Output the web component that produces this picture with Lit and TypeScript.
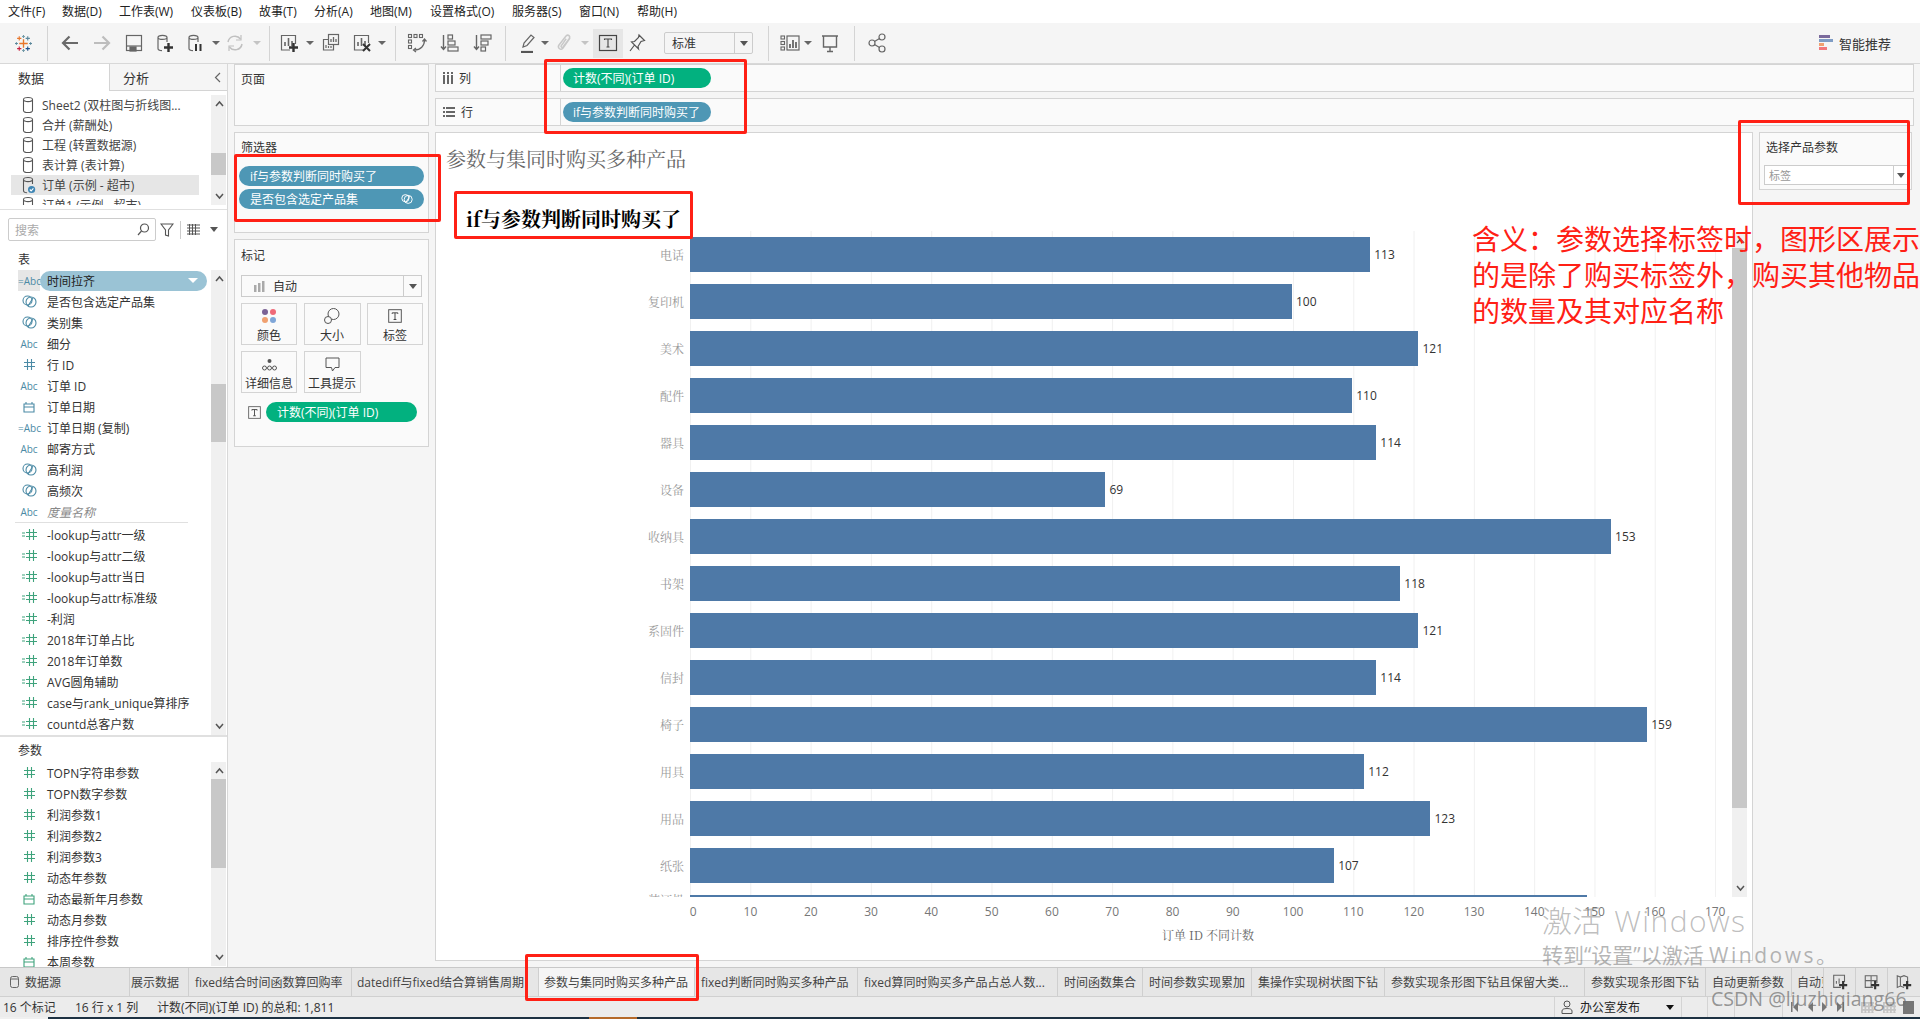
import { LitElement, html, svg, css } from "lit";
import { customElement } from "lit/decorators.js";

const S = (body: unknown, w = 20, h = 20, vb = "0 0 20 20") =>
  html`<svg width=${w} height=${h} viewBox=${vb} fill="none" stroke="#666" stroke-width="1.2">${body}</svg>`;

const plus = (x: number, y: number, c = "#333") =>
  svg`<path d="M${x + 4.5} ${y}v9M${x} ${y + 4.5}h9" stroke=${c} stroke-width="2.4"/>`;
const cyl = svg`<path d="M3 4.5C3 1.6 12 1.6 12 4.5V9M3 4.5C3 7 12 7 12 4.5M3 4.5V15.5C3 17 5 17.6 7 17.7" />`;
const barsMini = svg`<path d="M6 13V9M9.5 13V5M13 13V8" stroke-width="1.6"/>`;

const I: Record<string, unknown> = {
  logo: S(svg`<g stroke-width="1.3">
    <path d="M10 5v10M5 10h10" stroke="#e8762b" stroke-width="1.6"/>
    <path d="M5 1.5v5M2.5 4h5" stroke="#e8762b"/>
    <path d="M15 1.5v5M12.5 4h5" stroke="#5b879b"/>
    <path d="M5 13.5v5M2.5 16h5" stroke="#c8203f"/>
    <path d="M15 13.5v5M12.5 16h5" stroke="#1f4f8b"/>
    <path d="M10 0v3.4M8.4 1.7h3.2" stroke="#7099a6"/>
    <path d="M10 16.6v3.4M8.4 18.3h3.2" stroke="#7099a6"/>
    <path d="M1.7 8.4v3.2M0 10h3.4" stroke="#59879b"/>
    <path d="M18.3 8.4v3.2M16.6 10H20" stroke="#59879b"/></g>`, 17, 17),
  back: S(svg`<path d="M18 10H3M9.5 3.5 3 10l6.5 6.5" stroke="#6a6a6a" stroke-width="2.2"/>`),
  fwd: S(svg`<path d="M2 10h15M10.5 3.5 17 10l-6.5 6.5" stroke="#bdbdbd" stroke-width="2.2"/>`),
  save: S(svg`<rect x="2.5" y="2.5" width="15" height="15"/><path d="M3 13h14"/><rect x="6" y="14" width="6" height="4" fill="#666"/>`),
  dsadd: S(svg`${cyl}${plus(9, 10)}`),
  dspause: S(svg`${cyl}<path d="M10 11v7M14.5 11v7" stroke="#333" stroke-width="2"/>`),
  refresh: S(svg`<path d="M3 9a7 7 0 0 1 12.5-3M17 11a7 7 0 0 1-12.5 3" stroke="#c0c0c0" stroke-width="1.5"/><path d="M16 2v5h-5M4 18v-5h5" stroke="#c0c0c0"/>`),
  newsheet: S(svg`<path d="M11 17H2.5V2.5h14V11"/>${barsMini}${plus(10, 10)}`),
  dup: S(svg`<rect x="7.5" y="1.5" width="10" height="10" fill="#f5f5f5"/><path d="M10 9V6M12.5 9V4M15 9V6" stroke-width="1.3"/><path d="M7 6.500H2.500V17h10v-5"/><path d="M5 15v-3M7.500 15v-2M10 15v-2"/>`),
  clear: S(svg`<path d="M11 17H2.5V2.5h14V10"/>${barsMini}<path d="M11 11l7 7M18 11l-7 7" stroke="#333" stroke-width="2"/>`),
  swap: S(svg`<g stroke-width="1.1"><rect x="1.500" y="1.500" width="3" height="3"/><rect x="7" y="1.500" width="3" height="3"/><rect x="12.500" y="1.500" width="3" height="3"/><rect x="1.500" y="7" width="3" height="3"/><rect x="1.500" y="12.500" width="3" height="3"/></g><path d="M17.500 7c0 6-4 10-10 10" stroke-width="1.3"/><path d="M15.500 8.500l2-2.500 2 2.500M9 15l-2.500 2 2.500 2" stroke-width="1.3"/>`),
  sortasc: S(svg`<path d="M3.500 2v14M1 13.500l2.500 3 2.500-3" stroke-width="1.4"/><rect x="8" y="2" width="4.500" height="4"/><rect x="8" y="8" width="7" height="4"/><rect x="8" y="14" width="10" height="4"/>`),
  sortdesc: S(svg`<path d="M3.500 2v14M1 13.500l2.500 3 2.500-3" stroke-width="1.4"/><rect x="8" y="2" width="10" height="4"/><rect x="8" y="8" width="7" height="4"/><rect x="8" y="14" width="4.500" height="4"/>`),
  pen: S(svg`<path d="M5 14l1-4 7-8 3 2.500-7 8z"/><path d="M3 19h12" stroke="#555" stroke-width="2.2"/>`),
  clip: S(svg`<path d="M15 5l-7 10c-2 3 -6 0-4-3l7-9c2-2 5 0 3 3l-6 8c-1 1-2.500 0-1.800-1.200l5-7" stroke="#c8c8c8" stroke-width="1.5"/>`),
  t: S(svg`<rect x="1.500" y="2.500" width="17" height="15" stroke="#444" stroke-width="1.2"/><path d="M6.500 7V6h7v1M10 6v8M8.500 14h3" stroke="#444" stroke-width="1.1"/>`),
  pin: S(svg`<path d="M12 2l5.500 5.500-3.500 1-3 5 .5 2.500-7-7 3-.5 4-4zM7.500 12 3 18" stroke="#555"/>`),
  chart: S(svg`<g stroke-width="1.1"><rect x="1" y="3" width="3.500" height="3"/><rect x="1" y="8.500" width="3.500" height="3"/><rect x="1" y="14" width="3.500" height="3"/></g><rect x="7" y="3" width="12" height="14"/><path d="M10 15v-4M13 15V7M16 15v-6" stroke-width="1.800"/>`),
  present: S(svg`<path d="M2 3h16M3.500 3v11h13V3M10 14v4M7 18.500h6" stroke-width="1.400"/>`),
  share: S(svg`<circle cx="5" cy="10" r="3"/><circle cx="15" cy="4" r="3"/><circle cx="15" cy="16" r="3"/><path d="M7.500 8.500 12.500 5.500M7.500 11.500l5 3"/>`),
  cyl: S(svg`<path d="M3 4C3 1 13 1 13 4V16C13 19 3 19 3 16ZM3 4C3 7 13 7 13 4" stroke="#555"/>`, 16, 18, "0 0 16 20"),
  cylsel: html`<svg width="16" height="18" viewBox="0 0 16 20" fill="none" stroke="#555" stroke-width="1.200"><path d="M3 4C3 1 13 1 13 4V9M3 4C3 7 13 7 13 4M3 4V16C3 17.500 5 18.500 7 18.600"/><circle cx="12" cy="15" r="4" fill="#3f86b4" stroke="none"/><path d="M10 15l1.500 1.500 2.500-2.700" stroke="#fff"/></svg>`,
  set: html`<svg width="15" height="13" viewBox="0 0 15 13" fill="none" stroke="#4b8aa5" stroke-width="1.100"><circle cx="5.500" cy="5.500" r="4.500"/><circle cx="9" cy="7" r="5"/><path d="M6 11 11 3"/></svg>`,
  setw: html`<svg width="12" height="12" viewBox="0 0 15 13" fill="none" stroke="#fff" stroke-width="1.200"><circle cx="5.500" cy="5.500" r="4.500"/><circle cx="9" cy="7" r="5"/><path d="M6 11 11 3"/></svg>`,
  cal: html`<svg width="12" height="12" viewBox="0 0 12 12" fill="none" stroke="#4b8aa5" stroke-width="1.100"><path d="M1 3h10v8H1zM3 3V1M9 3V1M1 6h10"/></svg>`,
  calg: html`<svg width="12" height="12" viewBox="0 0 12 12" fill="none" stroke="#3ea37c" stroke-width="1.100"><path d="M1 3h10v8H1zM3 3V1M9 3V1M1 6h10"/></svg>`,
  hash: html`<svg width="11" height="11" viewBox="0 0 11 11" fill="none" stroke="#4b8aa5" stroke-width="1.100"><path d="M3.500 0v11M7.500 0v11M0 3.500h11M0 7.500h11"/></svg>`,
  hashg: html`<svg width="11" height="11" viewBox="0 0 11 11" fill="none" stroke="#3ea37c" stroke-width="1.100"><path d="M3.500 0v11M7.500 0v11M0 3.500h11M0 7.500h11"/></svg>`,
  eqhash: html`<svg width="15" height="11" viewBox="0 0 15 11" fill="none" stroke="#3ea37c" stroke-width="1.100"><path d="M0 4h3M0 7h3M7.500 0v11M11.500 0v11M4 3.500h11M4 7.500h11"/></svg>`,
  search: html`<svg width="13" height="13" viewBox="0 0 13 13" fill="none" stroke="#555" stroke-width="1.200"><circle cx="7.500" cy="5" r="4"/><path d="M4.500 8 1 12"/></svg>`,
  filter: html`<svg width="14" height="14" viewBox="0 0 14 14" fill="none" stroke="#555" stroke-width="1.100"><path d="M1 1h12L8.500 7v6l-3-1V7z"/></svg>`,
  grid: html`<svg width="13" height="11" viewBox="0 0 13 11" fill="none" stroke="#555" stroke-width="1"><path d="M0 1h13M0 4h13M0 7h13M0 10h13M2.500 0v11M5.500 0v11M8.500 0v11"/></svg>`,
};

const tbItems: { x: number; w: number; c?: unknown; k?: string }[] = [
  { x: 23, w: 20, c: I.logo },
  { x: 47.5, w: 1, k: "sep" },
  { x: 70, w: 20, c: I.back },
  { x: 102, w: 20, c: I.fwd },
  { x: 134, w: 20, c: I.save },
  { x: 165, w: 20, c: I.dsadd },
  { x: 196, w: 20, c: I.dspause },
  { x: 216, w: 8, k: "dd" },
  { x: 235, w: 20, c: I.refresh },
  { x: 257, w: 8, k: "ddl" },
  { x: 269, w: 1, k: "sep" },
  { x: 289, w: 20, c: I.newsheet },
  { x: 310, w: 8, k: "dd" },
  { x: 331, w: 20, c: I.dup },
  { x: 362, w: 20, c: I.clear },
  { x: 382, w: 8, k: "dd" },
  { x: 395, w: 1, k: "sep" },
  { x: 417, w: 20, c: I.swap },
  { x: 450, w: 20, c: I.sortasc },
  { x: 483, w: 20, c: I.sortdesc },
  { x: 505.5, w: 1, k: "sep" },
  { x: 528, w: 20, c: I.pen },
  { x: 545, w: 8, k: "dd" },
  { x: 565, w: 20, c: I.clip },
  { x: 585, w: 8, k: "ddl" },
  { x: 608, w: 30, k: "on", c: I.t },
  { x: 637, w: 20, c: I.pin },
];
const tbItems2: { x: number; w: number; c?: unknown; k?: string }[] = [
  { x: 768, w: 1, k: "sep" },
  { x: 790, w: 20, c: I.chart },
  { x: 808, w: 8, k: "dd" },
  { x: 830, w: 20, c: I.present },
  { x: 854, w: 1, k: "sep" },
  { x: 877, w: 20, c: I.share },
];

const menus: [string, number][] = [
  ["文件(F)", 54], ["数据(D)", 57], ["工作表(W)", 72], ["仪表板(B)", 68], ["故事(T)", 55], ["分析(A)", 56],
  ["地图(M)", 60], ["设置格式(O)", 82], ["服务器(S)", 67], ["窗口(N)", 58], ["帮助(H)", 50],
];

const dsRows = ["Sheet2 (双柱图与折线图...", "合并 (薪酬处)", "工程 (转置数据源)", "表计算 (表计算)", "订单 (示例 - 超市)", "订单1 (示例 - 超市)"];

type F = [string, string];
const dims: F[] = [
  ["set", "是否包含选定产品集"], ["set", "类别集"], ["abc", "细分"], ["hash", "行 ID"], ["abc", "订单 ID"],
  ["cal", "订单日期"], ["eqabc", "订单日期 (复制)"], ["abc", "邮寄方式"], ["set", "高利润"], ["set", "高频次"],
];
const meas: F[] = [
  ["eqhash", "-lookup与attr一级"], ["eqhash", "-lookup与attr二级"], ["eqhash", "-lookup与attr当日"], ["eqhash", "-lookup与attr标准级"],
  ["eqhash", "-利润"], ["eqhash", "2018年订单占比"], ["eqhash", "2018年订单数"], ["eqhash", "AVG圆角辅助"],
  ["eqhash", "case与rank_unique算排序"], ["eqhash", "countd总客户数"],
];
const params: F[] = [
  ["hashg", "TOPN字符串参数"], ["hashg", "TOPN数字参数"], ["hashg", "利润参数1"], ["hashg", "利润参数2"], ["hashg", "利润参数3"],
  ["hashg", "动态年参数"], ["calg", "动态最新年月参数"], ["hashg", "动态月参数"], ["hashg", "排序控件参数"], ["calg", "本周参数"],
];

const bars: [string, number][] = [
  ["电话", 113], ["复印机", 100], ["美术", 121], ["配件", 110], ["器具", 114], ["设备", 69], ["收纳具", 153],
  ["书架", 118], ["系固件", 121], ["信封", 114], ["椅子", 159], ["用具", 112], ["用品", 123], ["纸张", 107],
];
const UNIT = 6.02;

const tabs: [string, number, string?][] = [
  ["展示数据", 59, "clip"], ["fixed结合时间函数算回购率", 163], ["datediff与fixed结合算销售周期", 187, "cut"],
  ["参数与集同时购买多种产品", 156, "active"], ["fixed判断同时购买多种产品", 163], ["fixed算同时购买多产品占总人数...", 200],
  ["时间函数集合", 85], ["时间参数实现累加", 109], ["集操作实现树状图下钻", 133], ["参数实现条形图下钻且保留大类...", 200],
  ["参数实现条形图下钻", 121], ["自动更新参数", 86], ["自动更新", 32, "cut"],
];

@customElement("app-root")
export class AppRoot extends LitElement {
  static styles = css`
    :host { display: block; position: relative; width: 1920px; height: 1019px; overflow: hidden; background: #f5f5f5;
      font-family: "Open Sans", "Noto Sans CJK SC", sans-serif; font-size: 12px; color: #333; }
    * { box-sizing: border-box; }
    .app { display: flex; flex-direction: column; height: 1019px; }
    .menu { height: 23px; background: #fff; display: flex; align-items: center; padding-left: 8px; color: #222; line-height: 1; }
    .menu span { flex: none; white-space: nowrap; }
    .toolbar { height: 41px; display: flex; align-items: center; border-bottom: 1px solid #d8d8d8; position: relative; }
    .tb { display: flex; align-items: center; justify-content: center; flex: none; height: 20px; }
    .tb.sep { height: 35px; background: #d4d4d4; }
    .tb.dd::after, .tb.ddl::after { content: ""; border-left: 4px solid transparent; border-right: 4px solid transparent; border-top: 4px solid #666; }
    .tb.ddl::after { border-top-color: #c4c4c4; }
    .tb.on { background: #e6e6e6; height: 29px; }
    .std { width: 89px; height: 22px; margin-left: 17px; border: 1px solid #ccc; border-radius: 2px; display: flex; align-items: center; padding-left: 7px; background: #f5f5f5; font-size: 12px; flex: none; }
    .std b { font-weight: 400; flex: 1; }
    .std i { width: 18px; height: 100%; border-left: 1px solid #ccc; display: flex; align-items: center; justify-content: center; }
    .tri { width: 0; height: 0; border-left: 4px solid transparent; border-right: 4px solid transparent; border-top: 5px solid #555; flex: none; }
    .smart { margin-left: auto; display: flex; align-items: center; gap: 6px; margin-right: 29px; font-size: 13px; color: #333; }
    .smart span { display: flex; flex-direction: column; gap: 0; width: 14px; }
    .smart span u { display: block; height: 3px; margin-bottom: 1px; }

    .main { flex: 1; min-height: 0; display: flex; }
    .left { width: 228px; flex: none; background: #fff; border-right: 1px solid #d8d8d8; display: flex; flex-direction: column; overflow: hidden; }
    .ltabs { height: 27px; display: flex; flex: none; font-size: 13px; }
    .ltabs div { display: flex; align-items: center; }
    .ltabs .a { width: 110px; flex: none; padding-left: 18px; border-right: 1px solid #d4d4d4; background: #fff; }
    .ltabs .b { flex: 1; padding-left: 13px; background: #f5f5f5; border-bottom: 1px solid #d4d4d4; justify-content: space-between; padding-right: 6px; }
    .ds { height: 119px; flex: none; padding-top: 4px; padding-bottom: 4px; display: flex; border-bottom: 1px solid #e0e0e0; }
    .dslist { flex: 1; overflow: hidden; padding-left: 11px; padding-right: 12px; height: 110px; }
    .dsrow { height: 20px; display: flex; align-items: center; gap: 6px; padding-left: 9px; color: #444; white-space: nowrap; }
    .dsrow.sel { background: #e6e6e6; }
    .sb { width: 15px; flex: none; background: #f0f0f0; display: flex; flex-direction: column; margin-right: 1px; position: relative; }
    .sb .th { background: #c8c8c8; position: absolute; left: 0; right: 0; }
    .ar { position: absolute; left: 4px; width: 7px; height: 7px; }
    .ar svg { display: block; }
    .search { flex: none; height: 38px; padding-top: 8px; display: flex; align-items: flex-start; padding-left: 8px; }
    .sbox { width: 148px; height: 23px; border: 1px solid #ccc; border-radius: 2px; display: flex; align-items: center; justify-content: space-between; padding: 0 5px 0 6px; color: #aaa; font-size: 12px; }
    .sicons { display: flex; align-items: center; height: 23px; }
    .sdiv { width: 1px; height: 18px; background: #ccc; margin: 0 6px 0 6px; }
    .h { height: 23px; flex: none; padding-left: 18px; display: flex; align-items: center; color: #333; }
    .flist { display: flex; flex: none; height: 465px; }
    .fields { flex: 1; min-width: 0; overflow: hidden; }
    .frow { height: 21px; display: flex; align-items: center; padding-left: 18px; white-space: nowrap; color: #333; }
    .fi { width: 22px; flex: none; height: 100%; display: flex; align-items: center; justify-content: center; color: #4b8aa5; font-size: 10px; font-weight: 500; }
    .fi.eq { justify-content: flex-start; }
    .fi.gr { background: #e6e6e6; }
    .ft { margin-left: 7px; }
    .fpill { width: 167px; height: 20px; background: #9ac3d5; border-radius: 10px; padding: 0 9px 0 7px; display: flex; align-items: center; justify-content: space-between; color: #222; }
    .tw { width: 0; height: 0; border-left: 5px solid transparent; border-right: 5px solid transparent; border-top: 5px solid #fff; }
    .it { font-style: italic; color: #888; }
    .hr { height: 1px; background: #e0e0e0; margin: 0 23px 1px 15px; }
    .plist { display: flex; flex: 1; min-height: 0; }
    .sec { height: 2px; flex: none; background: #e0e0e0; }

    .col2 { width: 195px; flex: none; margin-left: 6px; display: flex; flex-direction: column; gap: 6px; }
    .card { background: #fafafa; border: 1px solid #d4d4d4; flex: none; }
    .ct { padding: 8px 0 0 6px; line-height: 14px; height: 24px; }
    .page { height: 62px; }
    .filter { height: 101px; }
    .pill { height: 20px; border-radius: 10px; color: #fff; display: flex; align-items: center; justify-content: space-between; padding: 0 11px; white-space: nowrap; }
    .blue { background: #4e97b5; }
    .green { background: #02b17f; }
    .fp { margin: 0 4px 3px 4px; }
    .fps { padding-top: 9px; }
    .marks { height: 208px; padding: 0 6px; }
    .marks .ct { padding-left: 0; height: 35px; padding-top: 9px; }
    .msel { height: 22px; border: 1px solid #ccc; background: #fafafa; display: flex; align-items: center; padding-left: 12px; gap: 8px; }
    .msel > span { flex: 1; }
    .msel i { width: 18px; height: 100%; border-left: 1px solid #ccc; display: flex; align-items: center; justify-content: center; }
    .mgrid { display: grid; grid-template-columns: 56px 57px 56px; gap: 6px 6.5px; margin-top: 6px; }
    .mb { height: 42px; border: 1px solid #d4d4d4; display: flex; flex-direction: column; align-items: center; justify-content: flex-start; padding-top: 2px; gap: 2px; background: #fafafa; line-height: 16px; }
    .mbi { height: 20px; display: flex; align-items: center; justify-content: center; }
    .mpr { display: flex; align-items: center; margin-top: 9px; padding-left: 7px; gap: 5px; }
    .mpr .pill { width: 151px; }

    .col3 { flex: 1; margin-left: 6px; margin-right: 6px; display: flex; flex-direction: column; gap: 6px; min-width: 0; }
    .shelf { height: 28px; background: #fafafa; border: 1px solid #d4d4d4; display: flex; flex: none; align-items: center; }
    .shl { width: 125px; height: 100%; border-right: 1px solid #d4d4d4; display: flex; align-items: center; gap: 6px; padding-left: 7px; }
    .shelf .pill { width: 148px; margin-left: 2px; padding: 0 10px; }
    .work { flex: 1; display: flex; gap: 6px; min-height: 0; }
    .view { width: 1318px; height: 829px; flex: none; background: #fff; border: 1px solid #d4d4d4; display: flex; flex-direction: column; overflow: hidden; }
    .vt { height: 55px; flex: none; padding: 12px 0 0 10px; font-family: "Noto Serif CJK SC", "Noto Sans CJK SC", serif; font-size: 20px; line-height: 28px; color: #666; white-space: nowrap; }
    .hd { height: 43px; flex: none; padding: 17px 0 0 30px; font-family: "Noto Serif CJK SC", "Noto Sans CJK SC", serif; font-size: 20px; font-weight: 700; line-height: 28px; color: #000; white-space: nowrap; }
    .pw { display: flex; flex: none; height: 666px; }
    .plot { width: 1296px; flex: none; height: 666px; overflow: hidden; }
    .rowsbg { background-image: linear-gradient(to right, #fff 254px, transparent 254px), linear-gradient(to right, #f0f0f0 1px, transparent 1px); background-size: 100% 100%, 60.3px 100%; background-repeat: no-repeat, repeat-x; background-position: 0 0, 254px 0; width: 1290px; height: 666px; }
    .r { height: 47px; display: flex; align-items: center; }
    .r.cut { height: 8px; align-items: flex-start; overflow: hidden; }
    .rl { width: 254px; flex: none; text-align: right; padding-right: 6px; color: #999; font-family: "Noto Serif CJK SC", "Noto Sans CJK SC", serif; line-height: 16px; }
    .r.cut .rl { margin-top: 3px; }
    .bar { height: 35px; background: #4e79a7; flex: none; }
    .r.cut .bar { margin-top: 6px; }
    .rv { margin-left: 4px; color: #333; font-size: 12px; }
    .vsb { width: 15px; flex: none; margin-top: 2px; height: 664px; position: relative; background: #f0f0f0; }
    .vsb .th { position: absolute; left: 0; right: 0; top: 15px; height: 560px; background: #c8c8c8; }
    .ax { display: flex; flex: none; height: 28px; padding-left: 224px; align-items: center; color: #777; }
    .tk { width: 60.3px; flex: none; text-align: center; }
    .tk.z { padding-left: 6px; }
    .at { flex: none; padding-left: 254px; width: 1290px; text-align: center; font-family: "Noto Serif CJK SC", "Noto Sans CJK SC", serif; color: #666; line-height: 16px; padding-top: 2px; }
    .param { width: 153px; height: 58px; background: #fafafa; border: 1px solid #d4d4d4; flex: none; padding: 8px 4px 0 4px; }
    .param .pt { padding-left: 2px; line-height: 14px; height: 24px; }
    .psel { height: 20px; border: 1px solid #ccc; background: #fff; display: flex; align-items: center; padding-left: 4px; color: #999; font-size: 11px; width: 145px; }
    .psel > span { flex: 1; }
    .psel i { width: 15px; height: 100%; border-left: 1px solid #ccc; display: flex; align-items: center; justify-content: center; }

    .tabs { height: 30px; flex: none; background: #e6e6e6; border-top: 1px solid #c8c8c8; border-bottom: 1px solid #d0d0d0; display: flex; }
    .tab { flex: none; border-right: 1px solid #cfcfcf; display: flex; align-items: center; padding-left: 6px; white-space: nowrap; overflow: hidden; color: #444; }
    .tab.clip { padding-left: 1px; }
    .tab.cut { padding-left: 5px; }
    .tab.active { background: #f5f5f5; padding-left: 5px; }
    .tab0 { width: 130px; flex: none; border-right: 1px solid #cfcfcf; display: flex; align-items: center; gap: 6px; padding-left: 10px; color: #444; }
    .tabi { width: 32px; flex: none; border-right: 1px solid #cfcfcf; display: flex; align-items: center; justify-content: center; }
    .tabi:last-child { border-right: 0; flex: 1; }
    .status { height: 20px; flex: none; background: #ececec; display: flex; align-items: center; color: #333; white-space: nowrap; padding-left: 3px; }
    .st1 { width: 72px; flex: none; }
    .st2 { width: 82px; flex: none; }
    .str { margin-left: auto; display: flex; align-items: center; height: 100%; }
    .cell { height: 100%; border-left: 1px solid #d4d4d4; display: flex; align-items: center; flex: none; }
    .pub { width: 127px; padding-left: 6px; gap: 7px; color: #222; }
    .pub > span { flex: 1; }
    .pub .tri { margin-right: 7px; border-top-color: #111; }
    .nav { gap: 9px; padding-left: 8px; width: 121px; }
    .sq { width: 11px; height: 13px; background: #777; margin-right: 6px; flex: none; }
    .dots { width: 13px; height: 11px; flex: none; background-image: linear-gradient(#c4c4c4 2px, transparent 1px), linear-gradient(to right, #c4c4c4 2px, transparent 1px); background-size: 3.5px 3.5px; }
    .strip { height: 2px; flex: none; background: linear-gradient(to right, #f0f0f0 48px, #1d3142 48px, #1d3142 589px, #b56a2a 589px, #b56a2a 637px, #1d3142 637px); }

    .rb { position: absolute; border: 3px solid #ff2015; border-radius: 2px; pointer-events: none; }
    .rb1 { left: 544px; top: 59px; width: 203px; height: 75px; }
    .rb2 { left: 234px; top: 154px; width: 207px; height: 68px; }
    .rb3 { left: 454px; top: 191px; width: 239px; height: 48px; }
    .rb4 { left: 1738px; top: 120px; width: 172px; height: 85px; }
    .rb5 { left: 525px; top: 954px; width: 174px; height: 47px; }
    .note { position: absolute; left: 1472px; top: 221px; width: 448px; font-size: 28px; line-height: 36px; color: #ff2015; white-space: nowrap; }
    .wm1 { position: absolute; left: 1542px; top: 898px; font-size: 30px; line-height: 46px; color: rgba(110,110,110,.45); font-weight: 300; white-space: nowrap; }
    .wm1 span { letter-spacing: 1.4px; margin-left: 3px; }
    .wm2 { position: absolute; left: 1542px; top: 940px; font-size: 21px; line-height: 30px; color: rgba(110,110,110,.5); white-space: nowrap; }
    .wm2 span { letter-spacing: 2.5px; }
    .wm3 { position: absolute; left: 1711px; top: 985px; font-size: 19.6px; line-height: 28px; color: rgba(110,110,110,.7); white-space: nowrap; }
  `;

  private place(items: { x: number; w: number; c?: unknown; k?: string }[], start: number) {
    let prev = start;
    return items.map((it) => {
      const l = it.x - it.w / 2;
      const ml = l - prev;
      prev = l + it.w;
      return html`<div class="tb ${it.k ?? ""}" style="width:${it.w}px;margin-left:${ml}px">${it.c ?? ""}</div>`;
    });
  }

  private up = html`<svg width="9" height="7" viewBox="0 0 9 7" fill="none" stroke="#555" stroke-width="1.5"><path d="M1 6l3.500-4L8 6"/></svg>`;
  private down = html`<svg width="9" height="7" viewBox="0 0 9 7" fill="none" stroke="#555" stroke-width="1.5"><path d="M1 1l3.500 4L8 1"/></svg>`;

  private fi(k: string) {
    if (k === "abc") return html`<div class="fi">Abc</div>`;
    if (k === "eqabc") return html`<div class="fi eq">=Abc</div>`;
    if (k === "eqhash") return html`<div class="fi">${I.eqhash}</div>`;
    return html`<div class="fi">${I[k]}</div>`;
  }

  private frow(f: F) {
    return html`<div class="frow">${this.fi(f[0])}<span class="ft">${f[1]}</span></div>`;
  }

  private scrollbar(h: number, top: number, th: number) {
    return html`<div class="sb" style="height:${h}px">
      <div class="ar" style="top:5px">${this.up}</div>
      <div class="th" style="top:${top}px;height:${th}px"></div>
      <div class="ar" style="bottom:5px">${this.down}</div>
    </div>`;
  }

  render() {
    const ticks = Array.from({ length: 18 }, (_, i) => i * 10);
    return html`
      <div class="app">
        <div class="menu">${menus.map(([m, w]) => html`<span style="width:${w}px">${m}</span>`)}</div>
        <div class="toolbar">
          ${this.place(tbItems, 0)}
          <div class="std"><b>标准</b><i><span class="tri"></span></i></div>
          ${this.place(tbItems2, 753)}
          <div class="smart"><span>
            <u style="background:#7b6a9c;width:11px"></u><u style="background:#7f9cc4;width:14px"></u><u style="background:#f0a070;width:5px"></u><u style="background:#f2787c;width:8px"></u>
          </span>智能推荐</div>
        </div>
        <div class="main">
          <div class="left">
            <div class="ltabs"><div class="a">数据</div><div class="b">分析<svg width="7" height="11" viewBox="0 0 7 11" fill="none" stroke="#666" stroke-width="1.2"><path d="M6 1 1.500 5.500 6 10"/></svg></div></div>
            <div class="ds">
              <div class="dslist">
                ${dsRows.map((d, i) => html`<div class="dsrow ${i === 4 ? "sel" : ""}">${i === 4 ? I.cylsel : I.cyl}<span>${d}</span></div>`)}
              </div>
              ${this.scrollbar(110, 58, 22)}
            </div>
            <div class="search">
              <div class="sbox">搜索${I.search}</div>
              <div class="sicons" style="margin-left:4px">${I.filter}<div class="sdiv"></div>${I.grid}<span class="tri" style="margin-left:10px"></span></div>
            </div>
            <div class="h" style="height:23px;margin-top:-1px;">表</div>
            <div class="flist">
              <div class="fields">
                <div class="frow"><div class="fi eq gr">=Abc</div><div class="fpill">时间拉齐<span class="tw"></span></div></div>
                ${dims.map((f) => this.frow(f))}
                ${html`<div class="frow">${this.fi("abc")}<span class="ft it">度量名称</span></div>`}
                <div class="hr"></div>
                ${meas.map((f) => this.frow(f))}
              </div>
              ${this.scrollbar(465, 114, 58)}
            </div>
            <div class="sec"></div>
            <div class="h" style="height:25px">参数</div>
            <div class="plist">
              <div class="fields">${params.map((f) => this.frow(f))}</div>
              ${this.scrollbar(204, 17, 89)}
            </div>
          </div>

          <div class="col2">
            <div class="card page"><div class="ct">页面</div></div>
            <div class="card filter">
              <div class="ct">筛选器</div>
              <div class="fps">
                <div class="pill blue fp">if与参数判断同时购买了</div>
                <div class="pill blue fp">是否包含选定产品集${I.setw}</div>
              </div>
            </div>
            <div class="card marks">
              <div class="ct">标记</div>
              <div class="msel">
                <svg width="11" height="11" viewBox="0 0 11 11" fill="#aaa"><rect x="0" y="4" width="2.5" height="7"/><rect x="4" y="2" width="2.5" height="9"/><rect x="8" y="0" width="2.5" height="11"/></svg>
                <span>自动</span><i><span class="tri"></span></i>
              </div>
              <div class="mgrid">
                <div class="mb"><div class="mbi"><svg width="16" height="16" viewBox="0 0 16 16"><circle cx="4" cy="4" r="3" fill="#7b6295"/><circle cx="12" cy="4" r="3" fill="#ef6a78"/><circle cx="4" cy="12" r="3" fill="#f0a070"/><circle cx="12" cy="12" r="3" fill="#7fa6d8"/></svg></div>颜色</div>
                <div class="mb"><div class="mbi"><svg width="16" height="16" viewBox="0 0 16 16" fill="none" stroke="#555"><circle cx="9.5" cy="6" r="5.5"/><circle cx="4" cy="12" r="3.5" fill="#fafafa"/></svg></div>大小</div>
                <div class="mb"><div class="mbi"><svg width="14" height="14" viewBox="0 0 20 20" fill="none"><rect x="1" y="1" width="18" height="18" stroke="#555" stroke-width="1.4"/><path d="M6 7V5.500h8V7M10 5.500V15M8 15h4" stroke="#444" stroke-width="1.4"/></svg></div>标签</div>
                <div class="mb"><div class="mbi"><svg width="15" height="13" viewBox="0 0 15 13" fill="none" stroke="#555"><circle cx="7.5" cy="3" r="2" fill="#555" stroke="none"/><circle cx="2.5" cy="10" r="2"/><circle cx="7.5" cy="10" r="2"/><circle cx="12.5" cy="10" r="2"/></svg></div>详细信息</div>
                <div class="mb"><div class="mbi"><svg width="15" height="15" viewBox="0 0 15 15" fill="none" stroke="#555"><path d="M1 1h13v9.500H10L7.500 14l-1-3.500H1z"/></svg></div>工具提示</div>
              </div>
              <div class="mpr">
                <svg width="13" height="13" viewBox="0 0 20 20" fill="none"><rect x="1" y="1" width="18" height="18" stroke="#666" stroke-width="1.4"/><path d="M6 7V5.500h8V7M10 5.500V15M8 15h4" stroke="#444" stroke-width="1.4"/></svg>
                <div class="pill green">计数(不同)(订单 ID)</div>
              </div>
            </div>
          </div>

          <div class="col3">
            <div class="shelf"><div class="shl"><svg width="10" height="12" viewBox="0 0 10 12" fill="#666"><rect x="0" y="0" width="2" height="2"/><rect x="4" y="0" width="2" height="2"/><rect x="8" y="0" width="2" height="2"/><rect x="0" y="3" width="2" height="9"/><rect x="4" y="3" width="2" height="9"/><rect x="8" y="3" width="2" height="9"/></svg>列</div><div class="pill green">计数(不同)(订单 ID)</div></div>
            <div class="shelf"><div class="shl"><svg width="12" height="10" viewBox="0 0 12 10" fill="#666"><rect x="0" y="0" width="2" height="2"/><rect x="0" y="4" width="2" height="2"/><rect x="0" y="8" width="2" height="2"/><rect x="3" y="0" width="9" height="2"/><rect x="3" y="4" width="9" height="2"/><rect x="3" y="8" width="9" height="2"/></svg>行</div><div class="pill blue">if与参数判断同时购买了</div></div>
            <div class="work">
              <div class="view">
                <div class="vt">参数与集同时购买多种产品</div>
                <div class="hd">if与参数判断同时购买了</div>
                <div class="pw">
                  <div class="plot"><div class="rowsbg">
                    ${bars.map(([n, v]) => html`<div class="r"><div class="rl">${n}</div><div class="bar" style="width:${v * UNIT}px"></div><span class="rv">${v}</span></div>`)}
                    <div class="r cut"><div class="rl">装订机</div><div class="bar" style="width:${149 * UNIT}px"></div></div>
                  </div></div>
                  <div class="vsb">
                    <div class="ar" style="top:4px">${this.up}</div>
                    <div class="th"></div>
                    <div class="ar" style="bottom:5px">${this.down}</div>
                  </div>
                </div>
                <div class="ax">${ticks.map((t) => html`<div class="tk ${t === 0 ? "z" : ""}">${t}</div>`)}</div>
                <div class="at">订单 ID 不同计数</div>
              </div>
              <div class="param">
                <div class="pt">选择产品参数</div>
                <div class="psel"><span>标签</span><i><span class="tri"></span></i></div>
              </div>
            </div>
          </div>
        </div>

        <div class="tabs">
          <div class="tab0"><svg width="9" height="12" viewBox="0 0 9 12" fill="none" stroke="#666"><rect x=".5" y=".5" width="8" height="11" rx="2"/><path d="M.5 3h8"/></svg>数据源</div>
          ${tabs.map(([t, w, k]) => html`<div class="tab ${k ?? ""}" style="width:${w}px">${t}</div>`)}
          <div class="tabi">${S(svg`<path d="M11 16H3V2.500h12V10"/><path d="M6 12V9M9 12V6"/>${plus(9, 9)}`, 18, 18)}</div>
          <div class="tabi">${S(svg`<path d="M11 16H2.500V3h13v8M2.500 8.500h13M9 3v13"/>${plus(9, 9)}`, 18, 18)}</div>
          <div class="tabi">${S(svg`<path d="M10 16 6 14.500 2.500 16V3L6 4.500 10 3 14 4.500V10M6 4.500v10"/>${plus(9, 9)}`, 18, 18)}</div>
        </div>
        <div class="status">
          <span class="st1">16 个标记</span><span class="st2">16 行 x 1 列</span><span>计数(不同)(订单 ID) 的总和: 1,811</span>
          <div class="str">
            <div class="cell pub">
              <svg width="12" height="14" viewBox="0 0 12 14" fill="none" stroke="#555"><circle cx="6" cy="4" r="3"/><path d="M1 13.500V11c0-1.500 1.500-2.500 5-2.500s5 1 5 2.500v2.500z"/></svg>
              <span>办公室发布</span><i class="tri"></i>
            </div>
            <div class="cell" style="width:26px"></div>
            <div class="cell" style="width:27px"></div>
            <div class="cell" style="width:48px"></div>
            <div class="cell nav">
              <svg width="7" height="10" viewBox="0 0 7 10" fill="#777"><rect width="1.5" height="10"/><path d="M7 0v10L2 5z"/></svg>
              <svg width="6" height="10" viewBox="0 0 6 10" fill="#777"><path d="M6 0v10L1 5z"/></svg>
              <svg width="6" height="10" viewBox="0 0 6 10" fill="#777"><path d="M0 0v10l5-5z"/></svg>
              <svg width="7" height="10" viewBox="0 0 7 10" fill="#777"><rect x="5.5" width="1.5" height="10"/><path d="M0 0v10l5-5z"/></svg>
              <span class="dots" style="margin-left:8px"></span><span class="dots"></span>
            </div>
            <div class="sq"></div>
          </div>
        </div>
        <div class="strip"></div>
      </div>

      <div class="rb rb1"></div><div class="rb rb2"></div><div class="rb rb3"></div><div class="rb rb4"></div><div class="rb rb5"></div>
      <div class="note">含义：参数选择标签时，图形区展示<br />的是除了购买标签外，购买其他物品<br />的数量及其对应名称</div>
      <div class="wm1">激活<span> Windows</span></div>
      <div class="wm2">转到“设置”以激活 <span>Windows</span>。</div>
      <div class="wm3">CSDN @liuzhiqiang66</div>
    `;
  }
}
